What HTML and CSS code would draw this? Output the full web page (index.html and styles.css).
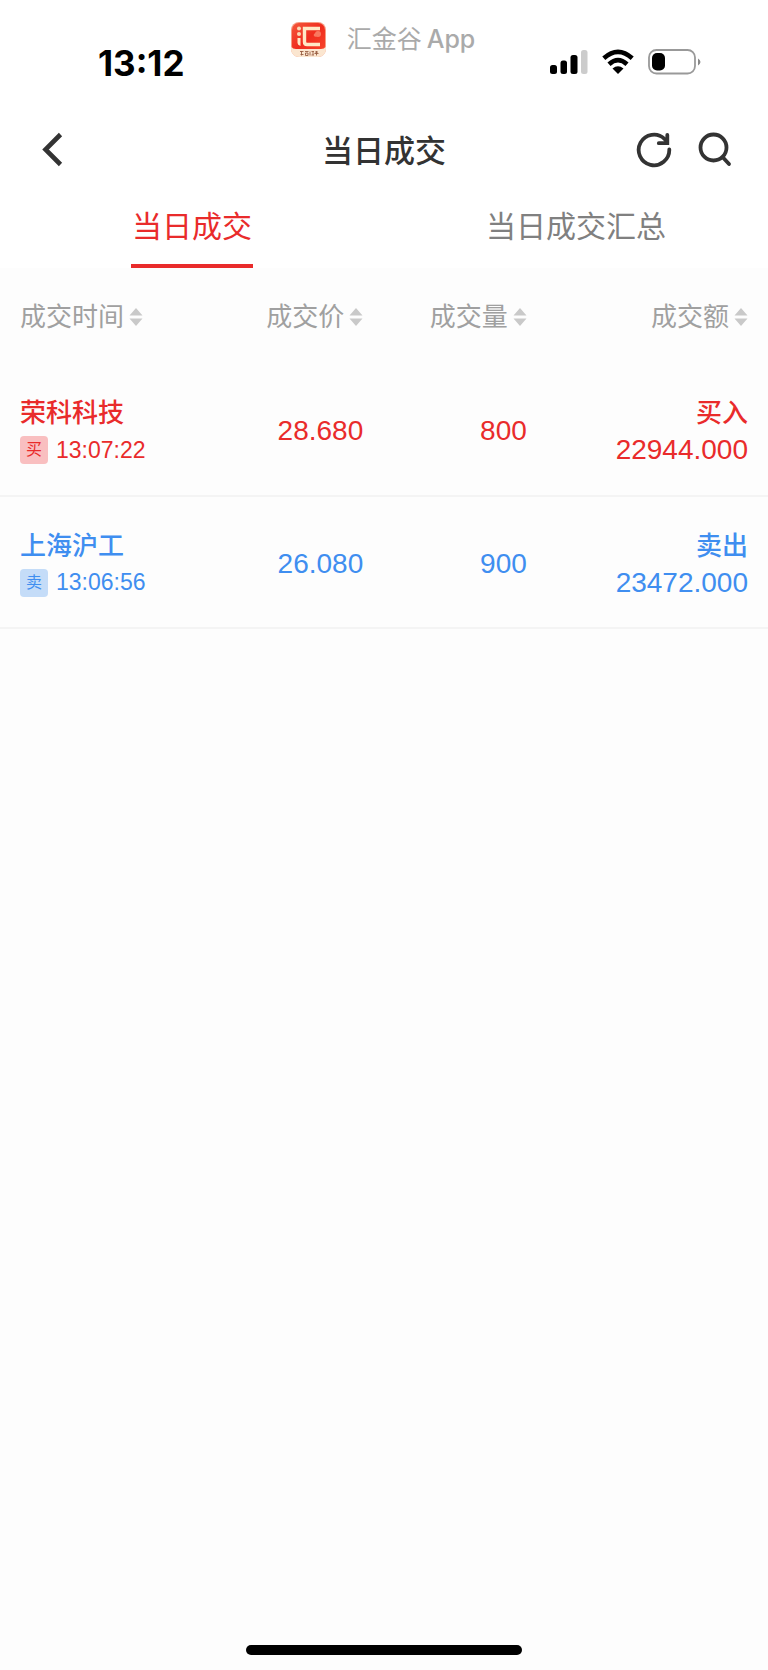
FILE: index.html
```html
<!DOCTYPE html>
<html lang="zh-CN">
<head>
<meta charset="utf-8">
<meta name="viewport" content="width=device-width, initial-scale=1">
<title>当日成交</title>
<link rel="stylesheet" href="styles.css">
</head>
<body>
<svg class="sprite" aria-hidden="true">
  <symbol id="sort" viewBox="0 0 14 20"><path d="M7 1 13.500 8.500H.5zM7 19 .5 11.500h13z"/></symbol>
</svg>
<div class="screen">
  <div class="status">
    <time class="clock">13:12</time>
    <div class="brand">
      <svg class="logo" viewBox="0 0 35 35" aria-hidden="true">
        <defs>
          <linearGradient id="red" x1="0" y1="0" x2="1" y2="1"><stop offset="0" stop-color="#f4583c"/><stop offset=".5" stop-color="#f02d1e"/><stop offset="1" stop-color="#f8472c"/></linearGradient>
          <clipPath id="tile"><rect width="35" height="35" rx="8"/></clipPath>
        </defs>
        <g clip-path="url(#tile)">
          <rect width="35" height="35" fill="#f79c83"/>
          <rect x="1" y="1" width="33" height="30" rx="7" fill="url(#red)"/>
          <path d="M0 25Q2 27 5 27H30Q33 27 35 25V35H0z" fill="#fbe6d0"/>
          <circle cx="27" cy="12" r="3" fill="#f97860"/><circle cx="24.500" cy="13" r="1.800" fill="#f97860"/>
          <circle cx="8" cy="6.500" r="2" fill="#fbd9b4"/><circle cx="8" cy="12" r="2" fill="#fbd9b4"/>
          <path d="M6.500 16h3v8q-3-1-3-3z" fill="#ffe9c6"/>
          <path d="M29 6.500H13.500V20q0 2.500 2.500 2.500h13" fill="none" stroke="#ffe9c6" stroke-width="3.400"/>
          <path d="M9 29.500h3.500M9.500 32.500h3M10.500 29v4.500M14 29.500h3.500M14.500 31v2.500h2.500V31zM19 29.500v4M20.500 29.500h2.500M20.500 33h2.500M22 30v3M24 30h3M23.500 31.500h4M25.500 29v4.500" fill="none" stroke="#995f43" stroke-width=".9"/>
        </g>
      </svg>
      <span class="brand-name">汇金谷<b>App</b></span>
    </div>
    <div class="indicators">
      <svg width="38" height="26" viewBox="0 0 38 26" aria-hidden="true">
        <rect x="0" y="16" width="7" height="9" rx="2.500"/><rect x="10.500" y="11.500" width="6.500" height="13.500" rx="2.500"/><rect x="20.500" y="6" width="7" height="19" rx="2.500"/><rect x="31" y="1" width="6.500" height="24" rx="2.500" fill="#ccc"/>
      </svg>
      <svg width="32" height="26" viewBox="0 0 32 26" aria-hidden="true">
        <path d="M1.800 9.200Q16-3.500 30.200 9.200M7 15.200Q16 7 25 15.200" fill="none" stroke="#000" stroke-width="4.600"/>
        <path d="M10.500 19.500Q16 15 21.500 19.500L16 25z"/>
      </svg>
      <svg width="53" height="26" viewBox="0 0 53 26" aria-hidden="true">
        <rect x="1" y="1" width="46" height="23.500" rx="7.500" fill="none" stroke="#999" stroke-width="1.800"/>
        <rect x="4" y="4" width="13" height="17.500" rx="5"/>
        <path d="M50 9.500q5 3.500 0 7z" fill="#888"/>
      </svg>
    </div>
  </div>

  <header class="bar">
    <button class="icon" aria-label="返回"><svg width="22" height="36" viewBox="0 0 22 36"><path d="M19.500 2.500 4.500 17.500 19.500 32.500" fill="none" stroke="#333" stroke-width="4.600"/></svg></button>
    <h1>当日成交</h1>
    <div class="actions">
      <button class="icon" aria-label="刷新"><svg width="36" height="36" viewBox="0 0 36 36"><g fill="none" stroke="#333" stroke-width="3.800" stroke-linecap="round"><path d="M33.300 17.500A15.300 15.300 0 1 1 28.500 6.800L31 10"/><path d="M31.300 3v8.200h-8.500"/></g></svg></button>
      <button class="icon" aria-label="搜索"><svg width="34" height="36" viewBox="0 0 34 36"><g fill="none" stroke="#333" stroke-width="3.800" stroke-linecap="round"><circle cx="15.500" cy="15.500" r="13"/><path d="m25 25.500 6 6.500"/></g></svg></button>
    </div>
  </header>

  <nav class="tabs">
    <a class="tab active" href="#today" aria-current="page">当日成交</a>
    <a class="tab" href="#summary">当日成交汇总</a>
  </nav>

  <main class="content" id="today">
    <table class="trades">
      <thead>
        <tr>
          <th class="c-time"><button class="sort">成交时间<svg><use href="#sort"/></svg></button></th>
          <th class="c-price"><button class="sort">成交价<svg><use href="#sort"/></svg></button></th>
          <th class="c-volume"><button class="sort">成交量<svg><use href="#sort"/></svg></button></th>
          <th class="c-amount"><button class="sort">成交额<svg><use href="#sort"/></svg></button></th>
        </tr>
      </thead>
      <tbody>
        <tr class="buy">
          <td><div class="name">荣科科技</div><div class="when"><span class="badge">买</span><time>13:07:22</time></div></td>
          <td>28.680</td>
          <td>800</td>
          <td><div class="name">买入</div><div class="amount">22944.000</div></td>
        </tr>
        <tr class="sell">
          <td><div class="name">上海沪工</div><div class="when"><span class="badge">卖</span><time>13:06:56</time></div></td>
          <td>26.080</td>
          <td>900</td>
          <td><div class="name">卖出</div><div class="amount">23472.000</div></td>
        </tr>
      </tbody>
    </table>
  </main>
  <div class="home"></div>
</div>
</body>
</html>
```
FILE: styles.css
```css
* { box-sizing: border-box; }

body {
  margin: 0;
  background: #fdfdfd;
  color: #333;
  font-family: "Liberation Sans", "Noto Sans CJK SC", sans-serif;
}

button {
  padding: 0;
  border: 0;
  background: none;
  color: inherit;
  font: inherit;
}

svg { display: block; }

.sprite {
  position: absolute;
  width: 0;
  height: 0;
}

.screen {
  display: flex;
  flex-direction: column;
  min-height: 100vh;
}

.status,
.bar,
.tabs { background: #fff; }

.status {
  display: grid;
  grid-template-columns: 1fr auto 1fr;
  height: 112px;
  padding: 20px 67px 0;
}

.clock {
  padding: 22px 0 0 31px;
  color: #000;
  font: bold 35px/42px Inter, sans-serif;
}

.brand {
  display: flex;
  align-items: center;
  gap: 21px;
  height: 38px;
  padding-right: 2px;
}

.logo {
  width: 35px;
  height: 35px;
}

.brand-name {
  color: #aaa;
  font-size: 25px;
  line-height: 38px;
}

.brand-name b {
  margin-left: 5px;
  font-family: Inter, sans-serif;
  font-weight: 500;
}

.indicators {
  display: flex;
  justify-content: flex-end;
  gap: 14px;
  padding-top: 29px;
}

.bar {
  display: grid;
  grid-template-columns: 1fr auto 1fr;
  align-items: center;
  height: 76px;
  padding: 0 36px;
}

.bar h1 {
  margin: 0;
  padding-top: 4px;
  font-size: 31px;
  font-weight: 500;
  line-height: 40px;
}

.actions {
  display: flex;
  justify-content: flex-end;
  gap: 26px;
}

.icon { justify-self: start; }

.bar > .icon { padding-left: 5px; }

.tabs {
  display: grid;
  grid-template-columns: 1fr 1fr;
  justify-items: center;
  height: 80px;
}

.tab {
  padding: 18px 1px 0;
  border-bottom: 4px solid transparent;
  color: #808080;
  font-size: 30px;
  line-height: 42px;
  text-decoration: none;
}

.active {
  border-color: #e92b2b;
  color: #e92b2b;
}

.content { flex: 1; }

.trades {
  width: 100%;
  border-collapse: collapse;
  table-layout: fixed;
}

.c-time { width: 27%; }
.c-price { width: 20.3%; }
.c-volume { width: 21.3%; }

th {
  height: 96px;
  padding: 2px 0 0;
  color: #a0a0a0;
  font-size: 26px;
  font-weight: 400;
  text-align: right;
}

.sort {
  display: inline-flex;
  align-items: center;
  gap: 5px;
  line-height: 36px;
}

.sort svg {
  width: 14px;
  height: 20px;
  fill: #c9c9c9;
}

td {
  height: 132px;
  padding: 3px 0 0;
  border-bottom: 2px solid #f4f4f4;
  font-size: 28px;
  text-align: right;
}

th:first-child,
td:first-child {
  padding-left: 20px;
  text-align: left;
}

th:last-child,
td:last-child { padding-right: 20px; }

.buy { color: #e92b2b; }
.sell { color: #3f8ef0; }

.name {
  font-size: 26px;
  font-weight: 500;
  line-height: 38px;
}

.when {
  display: flex;
  align-items: center;
  gap: 8px;
  height: 36px;
  font-size: 23px;
}

.amount { line-height: 36px; }

.badge {
  width: 28px;
  border-radius: 4px;
  background: #f9bfc0;
  font-size: 16px;
  line-height: 28px;
  text-align: center;
}

.sell .badge { background: #c4dcf8; }

.home {
  flex: none;
  width: 36%;
  height: 10px;
  margin: 0 auto 15px;
  border-radius: 5px;
  background: #000;
}
```
